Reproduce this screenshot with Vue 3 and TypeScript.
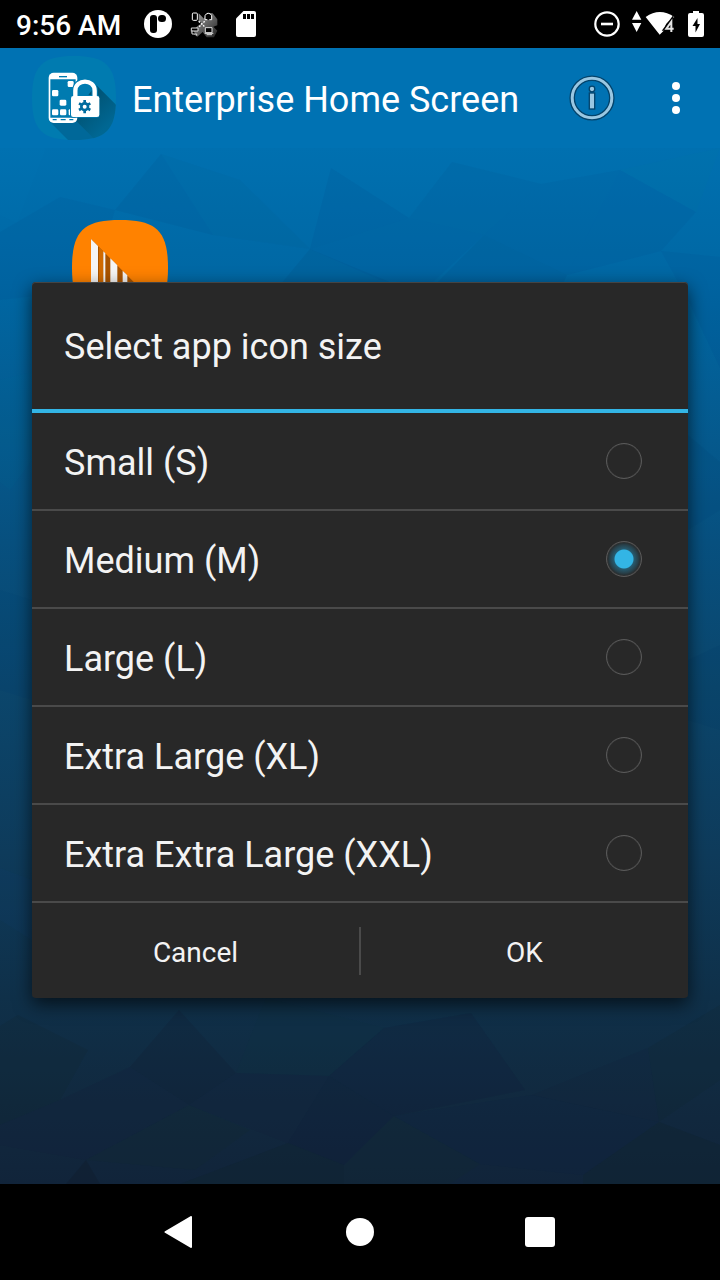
<script setup lang="ts">
import { ref } from 'vue'

interface SizeOption {
  id: string
  label: string
}

interface Facet {
  points: string
  fill: string
  opacity: number
}

const options: SizeOption[] = [
  { id: 's', label: 'Small (S)' },
  { id: 'm', label: 'Medium (M)' },
  { id: 'l', label: 'Large (L)' },
  { id: 'xl', label: 'Extra Large (XL)' },
  { id: 'xxl', label: 'Extra Extra Large (XXL)' },
]
const selected = ref('m')

const facets: Facet[] = [
  { points: '0,148 46,148 17,223 0,215', fill: '#0088c0', opacity: 0.1 },
  { points: '60,197 115,210 90,290 0,300 0,232', fill: '#003c80', opacity: 0.1 },
  { points: '161,154 213,235 115,210', fill: '#004070', opacity: 0.14 },
  { points: '161,154 240,180 310,249 213,235', fill: '#004878', opacity: 0.08 },
  { points: '331,168 409,218 310,249', fill: '#003c80', opacity: 0.14 },
  { points: '452,162 541,184 484,235 409,218', fill: '#004878', opacity: 0.12 },
  { points: '541,184 620,170 567,275 484,235', fill: '#004080', opacity: 0.12 },
  { points: '620,170 696,212 661,251 567,275', fill: '#003c80', opacity: 0.12 },
  { points: '620,170 720,148 696,212', fill: '#0080a0', opacity: 0.12 },
  { points: '310,249 409,218 484,235 430,285 380,280', fill: '#003c80', opacity: 0.1 },
  { points: '310,249 390,282 280,285', fill: '#003060', opacity: 0.14 },
  { points: '484,235 567,275 560,290 430,290', fill: '#003060', opacity: 0.12 },
  { points: '661,251 720,257 720,368 688,300', fill: '#003c80', opacity: 0.12 },
  { points: '688,435 720,462 720,510 688,530', fill: '#003c70', opacity: 0.16 },
  { points: '0,380 32,372 32,460 10,490 0,482', fill: '#0078a0', opacity: 0.12 },
  { points: '0,590 32,600 32,700 0,690', fill: '#003870', opacity: 0.14 },
  { points: '688,660 720,645 720,730 688,720', fill: '#003060', opacity: 0.14 },
  { points: '0,868 32,880 32,940 0,920', fill: '#104070', opacity: 0.25 },
  { points: '18,1015 88,1050 60,1100 0,1125 0,1026', fill: '#102830', opacity: 0.3 },
  { points: '179,1010 236,1073 189,1105 130,1067', fill: '#101c30', opacity: 0.3 },
  { points: '130,1067 189,1105 86,1160 0,1145 0,1125 60,1100', fill: '#14203c', opacity: 0.4 },
  { points: '236,1073 266,998 384,1028 329,1076', fill: '#103840', opacity: 0.2 },
  { points: '384,1028 471,1013 525,1090 394,1116 329,1076', fill: '#101c38', opacity: 0.3 },
  { points: '189,1105 236,1073 329,1076 288,1143', fill: '#14203c', opacity: 0.4 },
  { points: '329,1076 394,1116 344,1165 288,1143', fill: '#101c38', opacity: 0.4 },
  { points: '189,1105 250,1130 195,1170 86,1160', fill: '#102c30', opacity: 0.35 },
  { points: '394,1116 480,1164 450,1184 344,1184 344,1165', fill: '#102c30', opacity: 0.35 },
  { points: '394,1116 532,1095 659,1122 583,1175 480,1164', fill: '#102440', opacity: 0.4 },
  { points: '532,1095 648,1048 659,1122', fill: '#14203c', opacity: 0.3 },
  { points: '648,1048 720,1005 720,1080 659,1122', fill: '#102830', opacity: 0.3 },
  { points: '659,1122 720,1145 720,1184 583,1184 583,1175', fill: '#10242c', opacity: 0.5 },
  { points: '86,1160 100,1184 66,1184', fill: '#101c2c', opacity: 0.6 },
  { points: '288,1143 344,1165 344,1184 180,1184', fill: '#10242c', opacity: 0.5 },
]
</script>

<template>
  <div class="screen">
    <header class="status">
      <time class="clock">9:56 AM</time>
      <div class="status-left">
        <svg width="28" height="28" viewBox="0 0 28 28" aria-hidden="true">
          <circle cx="14" cy="14" r="14" fill="#fff" />
          <rect x="6" y="5" width="7" height="18" rx="3" />
          <rect x="14" y="5" width="8" height="7" rx="3.5" />
        </svg>
        <svg width="28" height="28" viewBox="0 0 84 84" aria-hidden="true">
          <defs>
            <linearGradient id="fade" x1="0" y1="0" x2="1" y2="1">
              <stop offset="0" stop-color="#aaa" />
              <stop offset="1" stop-color="#222" />
            </linearGradient>
          </defs>
          <path d="M26 10 42 26 52 8 68 10 82 28v18L70 50l12 12-10 20H50L38 66 22 80 2 66l24-20 10-6-10-6z" fill="url(#fade)" />
          <rect x="7" y="9" width="15" height="22" rx="3" fill="#000" stroke="#fff" stroke-width="3" />
          <path d="M45 29V17q3-7 10-7t10 7v12h-7M45 29h7" fill="#000" stroke="#fff" stroke-width="3" />
          <path d="M4 54h20v9H6v9h14v5M4 54v10" fill="#000" stroke="#ddd" stroke-width="3" />
          <path d="M46 53h20v15H46zM44 70h26M50 74h16" fill="#000" stroke="#ddd" stroke-width="3" />
          <path d="M26 34 46 52M44 34 26 52" stroke="#fff" stroke-width="4" stroke-dasharray="5 4" />
        </svg>
        <svg width="20" height="26" viewBox="0 0 20 26" aria-hidden="true">
          <path d="M7.500 0H18q2 0 2 2v22q0 2-2 2H2q-2 0-2-2V7.500z" fill="#fff" />
          <path d="M7 3h3v5H7zM11 3h3v5h-3zM15 3h3v5h-3z" />
        </svg>
      </div>
      <div class="status-right">
        <svg width="26" height="26" viewBox="0 0 26 26" aria-hidden="true">
          <circle cx="13" cy="13" r="11.700" fill="none" stroke="#fff" stroke-width="2.200" />
          <path d="M7 13h12" stroke="#fff" stroke-width="2.600" />
        </svg>
        <svg width="44" height="26" viewBox="0 0 132 78" aria-hidden="true">
          <path d="M0 26 14 0l14 26zM0 36h28L14 63z" fill="#fff" />
          <path d="M41 18Q83-12 127 18l-9 8q-19 8-20 30L83 71z" fill="#fff" />
          <path d="M118 63V31L102 53h24" fill="none" stroke="#000" stroke-width="13" />
          <path d="M118 63V32L103 53h22" fill="none" stroke="#e4e4e4" stroke-width="6" />
        </svg>
        <svg width="16" height="26" viewBox="0 0 16 26" aria-hidden="true">
          <path d="M5 0h6v2h3q2 0 2 2v20q0 2-2 2H2q-2 0-2-2V4q0-2 2-2h3z" fill="#fff" />
          <path d="M9.500 7 4.500 15H7.500V21.500L12 13H9.500z" />
        </svg>
      </div>
    </header>

    <div class="appbar">
      <svg width="84" height="84" viewBox="36 18 252 252" aria-hidden="true">
        <defs>
          <clipPath id="tile">
            <path d="M162 18C258 18 288 48 288 144S258 270 162 270 36 240 36 144 66 18 162 18z" />
          </clipPath>
          <linearGradient id="long-shadow" gradientUnits="userSpaceOnUse" x1="180" y1="150" x2="260" y2="230">
            <stop offset="0" stop-color="#00506f" />
            <stop offset="1" stop-color="#006793" />
          </linearGradient>
        </defs>
        <g clip-path="url(#tile)">
          <path d="M36 18h252v252H36z" fill="#007bb0" />
          <path d="M88 214 150 276h90L165 200z" fill="#006899" />
          <path d="M228 104 300 176v104H236L156 200z" fill="url(#long-shadow)" />
        </g>
        <rect x="86" y="68" width="86" height="151" rx="15" fill="#fff" />
        <path d="M91 88h76v115H91z" fill="#007bb0" />
        <path d="M117 80h24" stroke="#007bb0" stroke-width="4" />
        <path d="M98 209h12M122 209h15M148 209h12" stroke="#007bb0" stroke-width="4" />
        <g fill="#fff">
          <rect x="143" y="93" width="18" height="18" rx="4" />
          <rect x="96" y="120" width="19" height="19" rx="4" />
          <rect x="119" y="149" width="20" height="18" rx="4" />
          <rect x="96" y="178" width="19" height="18" rx="4" />
          <rect x="120" y="178" width="19" height="18" rx="4" />
          <rect x="146" y="178" width="8" height="18" rx="3" />
        </g>
        <path d="M166 142v-20c0-38 58-38 58 0v20" fill="none" stroke="#007bb0" stroke-width="19" />
        <rect x="150" y="135" width="88" height="68" rx="8" fill="#007bb0" />
        <path d="M166 142v-20c0-36 58-36 58 0v20" fill="none" stroke="#fff" stroke-width="13" />
        <rect x="153" y="138" width="85" height="63" rx="7" fill="#fff" />
        <circle cx="194" cy="170" r="10" fill="none" stroke="#006c9e" stroke-width="8" />
        <path d="M194 150v8M194 182v8M177 160l7 4M204 176l7 4M211 160l-7 4M184 176l-7 4" stroke="#006c9e" stroke-width="8" />
      </svg>
      <h1 class="title">Enterprise Home Screen</h1>
      <button class="icon-button" type="button" aria-label="Info">
        <svg width="48" height="48" viewBox="0 0 48 48">
          <circle cx="24" cy="24" r="19.800" fill="none" stroke="#03436b" stroke-width="5.600" />
          <circle cx="24" cy="24" r="19.800" fill="none" stroke="#99c7e2" stroke-width="3" />
          <circle cx="24" cy="15" r="2.800" fill="#99c7e2" stroke="#03436b" stroke-width="1.300" />
          <rect x="21.300" y="19" width="5.400" height="16" fill="#99c7e2" stroke="#03436b" stroke-width="1.300" />
        </svg>
      </button>
      <button class="icon-button more" type="button" aria-label="More options">
        <svg width="8" height="32" viewBox="0 0 8 32" fill="#fff">
          <circle cx="4" cy="4" r="4" />
          <circle cx="4" cy="16" r="4" />
          <circle cx="4" cy="28" r="4" />
        </svg>
      </button>
    </div>

    <main class="home">
      <svg class="wallpaper" viewBox="0 148 720 1036" preserveAspectRatio="none" aria-hidden="true">
        <polygon v-for="(f, i) in facets" :key="i" :points="f.points" :fill="f.fill" :opacity="f.opacity" />
      </svg>
      <button class="launcher" type="button" aria-label="Barcode scanner">
        <svg width="96" height="96" viewBox="36 30 288 288">
          <path d="M180 30C290 30 324 64 324 174S290 318 180 318 36 284 36 174 70 30 180 30z" fill="#ff8200" />
          <path d="M93 87 260 255H93z" fill="#a95400" />
          <path d="M117 111 130 124v131h-13z" fill="#d06a00" />
          <path d="M93 87 114 108v147H93zM130 124l6 6v125h-6zM151 145l21 21v89h-21zM188 182l14 14v59h-14z" fill="#f5f5f5" />
        </svg>
      </button>
    </main>

    <nav class="navbar" aria-label="System">
      <button class="icon-button" type="button" aria-label="Back">
        <svg width="32" height="32" viewBox="0 0 32 32"><path d="M27 1V31L1.500 16z" fill="#fff" stroke="#fff" stroke-width="2" stroke-linejoin="round" /></svg>
      </button>
      <button class="icon-button" type="button" aria-label="Home">
        <svg width="28" height="28" viewBox="0 0 28 28"><circle cx="14" cy="14" r="14" fill="#fff" /></svg>
      </button>
      <button class="icon-button" type="button" aria-label="Recent apps">
        <svg width="30" height="30" viewBox="0 0 30 30"><rect width="30" height="30" rx="3" fill="#fff" /></svg>
      </button>
    </nav>

    <div class="overlay">
      <form class="dialog" role="dialog" aria-labelledby="dialog-title" @submit.prevent>
        <h2 id="dialog-title" class="dialog-title">Select app icon size</h2>
        <div class="options" role="radiogroup" aria-labelledby="dialog-title">
          <label v-for="o in options" :key="o.id" class="option" :for="'size-' + o.id">
            <span class="option-label">{{ o.label }}</span>
            <input :id="'size-' + o.id" v-model="selected" class="radio" type="radio" name="size" :value="o.id" />
          </label>
        </div>
        <div class="actions">
          <button class="action" type="button">Cancel</button>
          <span class="separator"></span>
          <button class="action" type="submit">OK</button>
        </div>
      </form>
    </div>
  </div>
</template>

<style>
body {
  margin: 0;
  background: #000;
}
</style>

<style scoped>
.screen {
  position: relative;
  display: flex;
  flex-direction: column;
  min-height: 100vh;
  font-family: Roboto, 'Noto Sans', sans-serif;
}

button {
  padding: 0;
  border: 0;
  background: none;
  color: inherit;
  font-family: inherit;
}

svg {
  display: block;
}

.status {
  display: flex;
  align-items: center;
  height: 48px;
  padding: 0 16px;
  background: #000;
  color: #fff;
}

.clock {
  padding-top: 2px;
  font-size: 28px;
  font-weight: 500;
}

.status-left,
.status-right {
  display: flex;
  align-items: center;
}

.status-left {
  gap: 18px;
  margin-left: 23px;
}

.status-right {
  gap: 12px;
  margin-left: auto;
}

.appbar {
  display: flex;
  align-items: center;
  height: 100px;
  padding: 0 36px 0 32px;
  background: #0072b3;
  color: #fff;
}

.title {
  flex: 1;
  margin: 0 0 0 16px;
  padding-top: 4px;
  font-size: 36px;
  font-weight: 400;
  white-space: nowrap;
}

.more {
  width: 16px;
  margin-left: 52px;
}

.icon-button {
  display: flex;
  align-items: center;
  justify-content: center;
}

.home {
  position: relative;
  flex: 1;
  padding: 72px;
  background: linear-gradient(#0070b0 0%, #0067a3 13%, #045d93 24%, #07507f 38%, #0b466c 52%, #0e3b5b 68%, #0f3049 82%, #11293f 92%, #11243a 100%);
}

.wallpaper {
  position: absolute;
  inset: 0;
  width: 100%;
  height: 100%;
  opacity: 0.6;
}

.launcher {
  position: relative;
}

.navbar {
  display: grid;
  grid-template-columns: repeat(3, 180px);
  justify-content: center;
  height: 96px;
  background: #000;
}

.overlay {
  position: absolute;
  inset: 0;
  display: flex;
  align-items: center;
  padding: 0 32px;
}

.dialog {
  flex: 1;
  overflow: hidden;
  border-radius: 4px;
  background: #282828;
  color: #f3f3f3;
  box-shadow: 0 6px 18px rgba(0, 0, 0, 0.65), inset 0 1px 0 #444;
}

.dialog-title {
  margin: 0;
  padding: 3px 32px 0;
  border-bottom: 4px solid #33b5e5;
  font-size: 36px;
  font-weight: 400;
  line-height: 124px;
}

.option {
  display: flex;
  align-items: center;
  justify-content: space-between;
  height: 96px;
  padding: 0 46px 0 32px;
  border-bottom: 2px solid #4a4a4a;
  font-size: 36px;
}

.option-label {
  padding-top: 4px;
}

.radio {
  appearance: none;
  box-sizing: border-box;
  width: 36px;
  height: 36px;
  margin: 0;
  border: 1px solid #5a5a5a;
  border-radius: 50%;
  box-shadow: inset 0 0 1px #5a5a5a;
}

.radio:checked {
  background: radial-gradient(circle at center, #33b5e5 0 8px, #33b5e5 9px, #265b70 10px, #28414b 14px, #282828 17px);
}

.actions {
  display: flex;
  align-items: center;
  height: 95px;
}

.action {
  flex: 1;
  align-self: stretch;
  padding-top: 4px;
  font-size: 28px;
}

.separator {
  width: 2px;
  height: 48px;
  background: #4a4a4a;
}
</style>
